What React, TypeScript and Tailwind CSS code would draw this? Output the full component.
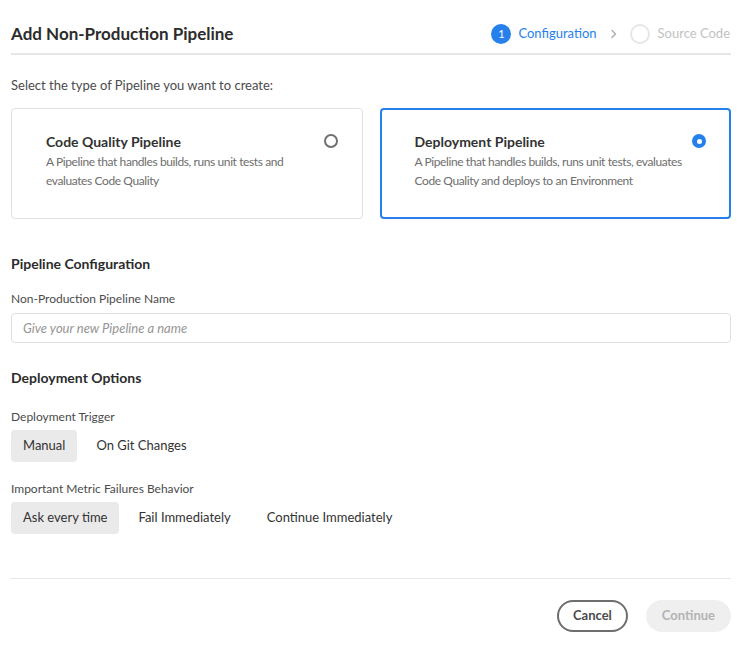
import React, { useState } from 'react';

const font = { fontFamily: 'Lato, "Open Sans", sans-serif' };

function Radio({ checked }: { checked: boolean }) {
  return checked ? (
    <span className="flex h-[14px] w-[14px] shrink-0 items-center justify-center rounded-full bg-[#2680eb]">
      <span className="h-[5px] w-[5px] rounded-full bg-white" />
    </span>
  ) : (
    <span className="block h-[14px] w-[14px] shrink-0 rounded-full border-2 border-[#707070] bg-white" />
  );
}

function TypeCard({
  title,
  desc,
  selected,
  onClick,
}: {
  title: string;
  desc: React.ReactNode;
  selected: boolean;
  onClick: () => void;
}) {
  return (
    <button
      onClick={onClick}
      className={
        'flex h-[111px] min-w-0 items-start justify-between rounded-[4px] bg-white text-left ' +
        (selected
          ? 'border-2 border-[#2680eb] pl-[33px] pr-[23px] pt-[23px]'
          : 'border border-[#e1e1e1] pl-[34px] pr-[24px] pt-[24px]')
      }
    >
      <div className="min-w-0 flex-1 whitespace-nowrap">
        <div className="text-[14px] font-bold leading-[18px] text-[#323232]">{title}</div>
        <div className="mt-[1px] text-[12px] leading-[19px] tracking-[-0.4px] text-[#6e6e6e]">{desc}</div>
      </div>
      <div className="shrink-0 pt-[1px]">
        <Radio checked={selected} />
      </div>
    </button>
  );
}

function Segmented({
  options,
  value,
  onChange,
}: {
  options: string[];
  value: string;
  onChange: (v: string) => void;
}) {
  return (
    <div className="mt-[5px] flex gap-[2px]">
      {options.map((o) => (
        <button
          key={o}
          onClick={() => onChange(o)}
          className={
            'h-[32px] rounded-[4px] text-[13px] text-[#323232] ' +
            (o === value ? 'bg-[#eaeaea] px-[12px]' : 'bg-transparent px-[17px]')
          }
        >
          {o}
        </button>
      ))}
    </div>
  );
}

export default function App() {
  const [type, setType] = useState('deploy');
  const [trigger, setTrigger] = useState('Manual');
  const [behavior, setBehavior] = useState('Ask every time');

  return (
    <div className="min-h-screen w-full bg-white" style={font}>
      <div className="mx-[11px] w-[720px] pt-[20px]">
        <header className="flex h-[35px] items-start justify-between border-b-2 border-[#e6e6e6]">
          <h1 className="text-[17px] font-bold leading-[28px] text-[#2c2c2c]">Add Non-Production Pipeline</h1>
          <div className="flex items-center pt-[4px] text-[13px]">
            <span className="flex h-[20px] w-[20px] items-center justify-center rounded-full bg-[#2680eb] text-[11px] text-white">
              1
            </span>
            <span className="ml-[7px] text-[#2680eb]">Configuration</span>
            <svg className="ml-[12px]" width="10" height="10" viewBox="0 0 10 10">
              <path d="M3 1.5 L6.5 5 L3 8.5" fill="none" stroke="#b3b3b3" strokeWidth="1.6" strokeLinecap="round" strokeLinejoin="round" />
            </svg>
            <span className="ml-[11px] h-[20px] w-[20px] rounded-full border-2 border-[#e6e6e6]" />
            <span className="ml-[8px] mr-[1px] text-[#c2c2c2]">Source Code</span>
          </div>
        </header>

        <p className="mt-[21px] text-[13px] leading-[18px] text-[#4b4b4b]">Select the type of Pipeline you want to create:</p>

        <div className="mt-[14px] grid grid-cols-2 gap-[17px]">
          <TypeCard
            title="Code Quality Pipeline"
            desc={<>A Pipeline that handles builds, runs unit tests and<br />evaluates Code Quality</>}
            selected={type === 'quality'}
            onClick={() => setType('quality')}
          />
          <TypeCard
            title="Deployment Pipeline"
            desc={<>A Pipeline that handles builds, runs unit tests, evaluates<br />Code Quality and deploys to an Environment</>}
            selected={type === 'deploy'}
            onClick={() => setType('deploy')}
          />
        </div>

        <h2 className="mt-[36px] text-[14px] font-bold leading-[18px] text-[#2c2c2c]">Pipeline Configuration</h2>
        <label className="mt-[18px] block text-[12px] leading-[16px] text-[#4b4b4b]">Non-Production Pipeline Name</label>
        <input
          placeholder="Give your new Pipeline a name"
          className="mt-[6px] h-[30px] w-full rounded-[4px] border border-[#e1e1e1] px-[11px] text-[13px] italic text-[#323232] outline-none placeholder:text-[#959595]"
        />

        <h2 className="mt-[26px] text-[14px] font-bold leading-[18px] text-[#2c2c2c]">Deployment Options</h2>
        <label className="mt-[22px] block text-[12px] leading-[16px] text-[#4b4b4b]">Deployment Trigger</label>
        <Segmented options={['Manual', 'On Git Changes']} value={trigger} onChange={setTrigger} />

        <label className="mt-[19px] block text-[12px] leading-[16px] text-[#4b4b4b]">Important Metric Failures Behavior</label>
        <Segmented
          options={['Ask every time', 'Fail Immediately', 'Continue Immediately']}
          value={behavior}
          onChange={setBehavior}
        />

        <div className="mt-[44px] border-t border-[#e6e6e6]" />

        <div className="mt-[21px] flex justify-end gap-[18px]">
          <button className="h-[32px] rounded-full border-2 border-[#6e6e6e] px-[14px] text-[13px] font-bold text-[#4b4b4b]">
            Cancel
          </button>
          <button disabled className="h-[32px] rounded-full bg-[#efefef] px-[16px] text-[13px] font-bold text-[#b3b3b3]">
            Continue
          </button>
        </div>
      </div>
    </div>
  );
}
